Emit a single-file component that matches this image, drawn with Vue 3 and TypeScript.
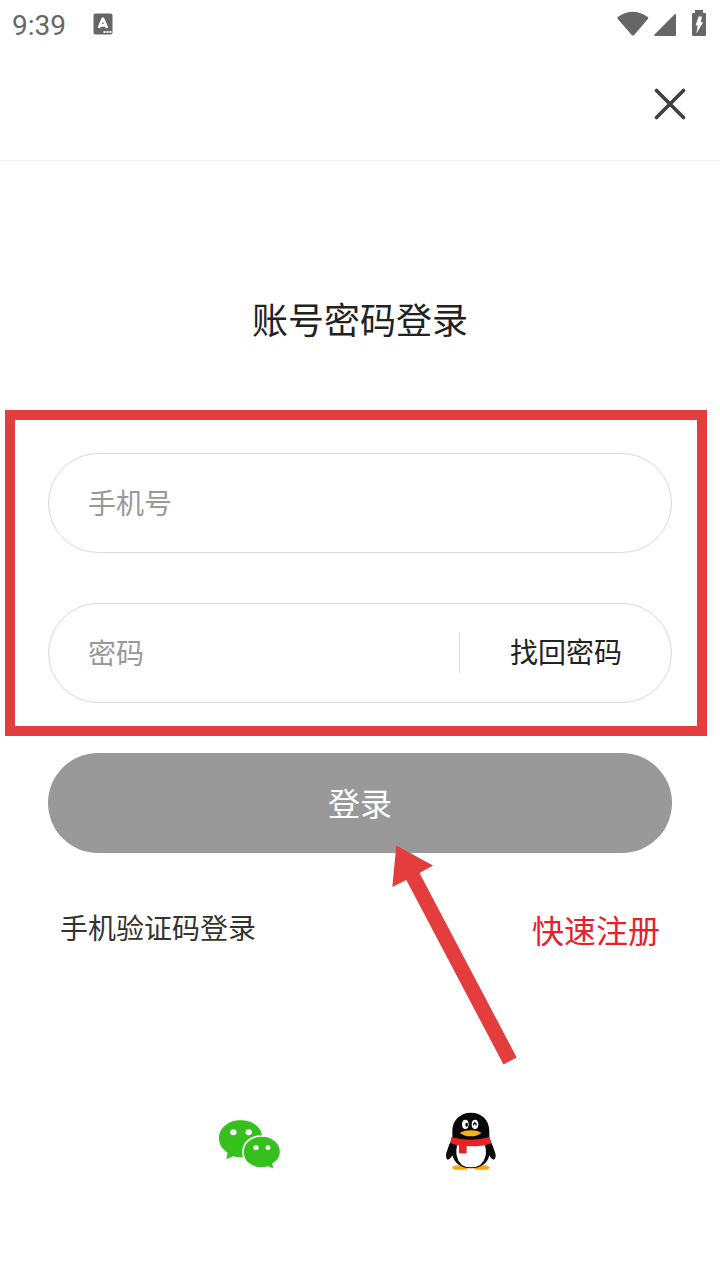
<script setup lang="ts">
import { ref } from 'vue'

const phone = ref('')
const password = ref('')
</script>

<template>
  <div class="screen">
    <div class="status">
      <span class="time">9:39</span>
      <svg class="input-icon" width="20" height="22" viewBox="0 0 20 22" aria-hidden="true">
        <rect x="0.5" y="0.5" width="19" height="21" rx="2" fill="#666" />
        <path d="M5.8 15 L9.7 5.8 H10.1 L14 15 M7.4 12.3 H12.4" fill="none" stroke="#fff" stroke-width="2.7" />
        <path d="M10.5 18h2v2h-2z M13.5 18h2v2h-2z M16.5 18h2v2h-2z" fill="#fff" />
      </svg>
      <svg class="signals" width="90" height="28" viewBox="0 0 90 28" aria-hidden="true">
        <g fill="#666">
          <path d="M0.8 8.9 Q0 7.6 1.2 6.8 Q15.5 -3.2 30.4 6.8 Q31.8 7.6 30.9 8.9 L17.2 25 Q16 26.2 14.7 25 Z" />
          <path d="M59 5.2 V25 Q59 26 58 26 H38.5 Q36.2 26 37.8 24.3 L57.4 4.6 Q59 3.4 59 5.2 Z" />
          <path d="M78 0 H86 V3 H87.7 Q89 3 89 4.3 V24.7 Q89 26 87.7 26 H76.3 Q75 26 75 24.7 V4.3 Q75 3 76.3 3 H78 Z" />
        </g>
        <path d="M81.5 6.5 H85 L83.8 12.2 H86.2 L79.3 23.5 L80.7 15.4 H78.6 Z" fill="#fff" />
      </svg>
    </div>

    <header class="nav">
      <button class="close" type="button" aria-label="关闭">
        <svg width="32" height="32" viewBox="0 0 32 32" aria-hidden="true">
          <path d="M2.5 2.5 L29.5 29.5 M29.5 2.5 L2.5 29.5" stroke="#3f3f3f" stroke-width="3.6" stroke-linecap="round" />
        </svg>
      </button>
    </header>

    <main class="content">
      <h1 class="title">账号密码登录</h1>

      <form class="form" @submit.prevent>
        <div class="fields">
          <div class="field">
            <input v-model="phone" type="tel" placeholder="手机号" aria-label="手机号" />
          </div>
          <div class="field">
            <input v-model="password" type="password" placeholder="密码" aria-label="密码" />
            <a class="recover" href="#">找回密码</a>
          </div>
          <div class="highlight" aria-hidden="true"></div>
        </div>

        <div class="submit-wrap">
          <button class="submit" type="submit">登录</button>
          <svg class="arrow" width="127" height="220" viewBox="0 0 127 220" aria-hidden="true">
            <path d="M6.3 0.5 L43 20.6 L29.5 28 L126.7 212.5 L113.5 219.5 L16.3 35 L2.3 42 Z" fill="#e43d3d" />
          </svg>
        </div>
      </form>

      <div class="links">
        <a class="sms" href="#">手机验证码登录</a>
        <a class="register" href="#">快速注册</a>
      </div>

      <div class="social">
        <button type="button" aria-label="微信登录">
          <svg width="100" height="100" viewBox="0 0 300 300" aria-hidden="true">
            <g fill="#35c01e">
              <path d="M122 91 C160 91 187 113 187 145 C187 178 160 202 122 202 Q108 202 99 199 L79 208 L83 188 C65 177 57 162 57 145 C57 114 85 91 122 91 Z" />
              <path d="M184 138 C218 138 242 158 242 186 C242 202 235 213 219 222 L223 239 L203 231 Q195 234 184 234 C152 234 129 214 129 186 C129 158 152 138 184 138 Z" stroke="#fff" stroke-width="5" />
            </g>
            <g fill="#fff">
              <ellipse cx="100" cy="127" rx="9.5" ry="9" />
              <ellipse cx="146" cy="127" rx="9.5" ry="9" />
              <ellipse cx="168" cy="173" rx="8" ry="7" />
              <ellipse cx="204" cy="173" rx="7.5" ry="7" />
            </g>
          </svg>
        </button>
        <button type="button" aria-label="QQ登录">
          <svg width="100" height="100" viewBox="-28 -15 300 300" aria-hidden="true">
            <path d="M69 216 Q74 209 91 211 L116 218 Q116 224 103 224 H77 Q68 223 69 216 Z M180 216 Q174 209 158 211 L133 218 Q133 224 146 224 H172 Q181 223 180 216 Z" fill="#f9a90c" />
            <path d="M125 53 C157 53 180 75 180 108 V130 Q190 151 198 175 Q201 190 194 194 Q187 194 180 181 C175 206 154 220 125 220 C96 220 76 206 69 181 Q62 194 55 194 Q48 190 51 174 Q57 151 69 130 V108 C69 75 93 53 125 53 Z" fill="#080808" />
            <path d="M85 146 H165 Q173 166 168 185 Q160 217 125 217 Q90 217 83 185 Q78 166 85 146 Z" fill="#fff" />
            <path d="M66 126 Q124 143 180 126 L187 145 Q157 157 112 153 V174 Q100 177 89 174 V151 Q73 149 63 143 Z" fill="#e82225" />
            <ellipse cx="108" cy="88" rx="10" ry="14" fill="#fff" />
            <ellipse cx="137" cy="88" rx="10" ry="14" fill="#fff" />
            <ellipse cx="112" cy="89" rx="4" ry="6" fill="#080808" />
            <path d="M133 91 Q132 84 137 84 Q141 85 140 91" fill="none" stroke="#080808" stroke-width="4" />
            <path d="M91 113 Q106 106 124 106 Q143 106 157 113 Q144 124 124 124 Q104 124 91 113 Z" fill="#f8b414" />
          </svg>
        </button>
      </div>
    </main>
  </div>
</template>

<style>
body {
  margin: 0;
  background: #fff;
}
</style>

<style scoped>
.screen {
  min-height: 100vh;
  background: #fff;
  color: #222;
  font-family: "Noto Sans CJK SC", sans-serif;
}

.screen * {
  box-sizing: border-box;
}

svg {
  display: block;
}

button {
  padding: 0;
  border: 0;
  background: none;
  font: inherit;
  cursor: pointer;
}

a {
  text-decoration: none;
}

.status {
  display: flex;
  align-items: center;
  height: 48px;
  padding: 0 13px 0 12px;
}

.time {
  padding-top: 3px;
  color: #666;
  font: 400 28px/40px Roboto, sans-serif;
}

.input-icon {
  margin-left: 27px;
}

.signals {
  margin-left: auto;
}

.nav {
  display: flex;
  align-items: center;
  justify-content: flex-end;
  height: 113px;
  padding: 0 34px;
  border-bottom: 1px solid #eee;
}

.content {
  padding: 133px 48px 0;
}

.title {
  margin: 0;
  font-size: 36px;
  font-weight: 400;
  line-height: 48px;
  text-align: center;
}

.fields {
  position: relative;
  display: grid;
  gap: 50px;
  margin-top: 111px;
}

.field {
  display: flex;
  align-items: center;
  height: 100px;
  border: 1px solid #d9d9d9;
  border-radius: 50px;
}

.field input {
  flex: 1;
  min-width: 0;
  height: 96px;
  padding: 0 39px 3px;
  border: 0;
  outline: 0;
  background: transparent;
  color: #222;
  font: inherit;
  font-size: 28px;
}

.field input::placeholder {
  color: #999;
  opacity: 1;
}

.recover {
  padding: 0 49px 3px 50px;
  border-left: 1px solid #d9d9d9;
  color: #222;
  font-size: 28px;
  line-height: 37px;
}

.highlight {
  position: absolute;
  inset: -43px -35px -33px -43px;
  border: 10px solid #e43d3d;
  pointer-events: none;
}

.submit-wrap {
  position: relative;
  margin-top: 50px;
}

.submit {
  width: 100%;
  height: 100px;
  padding-bottom: 3px;
  border-radius: 50px;
  background: #999;
  color: #fff;
  font-size: 32px;
}

.arrow {
  position: absolute;
  top: 92px;
  left: calc(50% + 30px);
  pointer-events: none;
}

.links {
  display: flex;
  align-items: flex-start;
  justify-content: space-between;
  margin-top: 54px;
  padding: 0 12px;
}

.sms {
  color: #333;
  font-size: 28px;
  line-height: 40px;
}

.register {
  color: #e8202a;
  font-size: 32px;
  line-height: 44px;
}

.social {
  display: flex;
  justify-content: center;
  gap: 120px;
  margin-top: 139px;
}
</style>
